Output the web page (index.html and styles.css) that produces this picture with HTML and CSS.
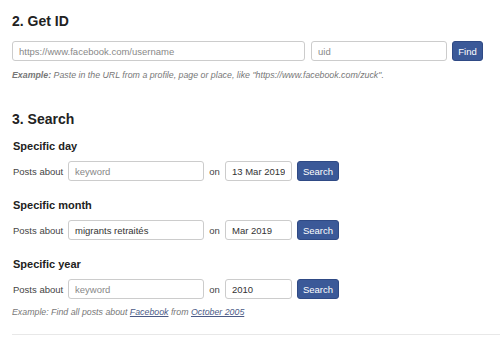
FILE: index.html
```html
<!DOCTYPE html>
<html>
<head>
<meta charset="utf-8">
<link rel="stylesheet" href="styles.css">
</head>
<body>
<div class="page">
  <section class="section">
    <h2 class="title">2. Get ID</h2>
    <div class="id-row">
      <input class="field field-url" type="text" placeholder="https://www.facebook.com/username">
      <input class="field field-uid" type="text" placeholder="uid">
      <button class="btn">Find</button>
    </div>
    <p class="hint"><b>Example:</b> Paste in the URL from a profile, page or place, like "https://www.facebook.com/zuck".</p>
  </section>

  <section class="section search">
    <h2 class="title">3. Search</h2>

    <h3 class="sub">Specific day</h3>
    <div class="row">
      <span class="label">Posts about</span>
      <input class="field field-kw" type="text" placeholder="keyword">
      <span class="on">on</span>
      <input class="field field-date" type="text" value="13 Mar 2019">
      <button class="btn">Search</button>
    </div>

    <h3 class="sub">Specific month</h3>
    <div class="row">
      <span class="label">Posts about</span>
      <input class="field field-kw" type="text" value="migrants retraités">
      <span class="on">on</span>
      <input class="field field-date" type="text" value="Mar 2019">
      <button class="btn">Search</button>
    </div>

    <h3 class="sub">Specific year</h3>
    <div class="row">
      <span class="label">Posts about</span>
      <input class="field field-kw" type="text" placeholder="keyword">
      <span class="on">on</span>
      <input class="field field-date" type="text" value="2010">
      <button class="btn">Search</button>
    </div>
    <p class="hint hint-search">Example: Find all posts about <a href="#">Facebook</a> from <a href="#">October 2005</a></p>
  </section>
  <hr class="rule">
</div>
</body>
</html>
```
FILE: styles.css
```css
* { box-sizing: border-box; }
html, body { margin: 0; padding: 0; background: #fff; }
body {
  font-family: "Liberation Sans", Arial, sans-serif;
  color: #333;
  width: 500px;
  height: 337px;
  overflow: hidden;
}
.page {
  padding: 13px 0 0 12px;
}
.title {
  margin: 0;
  font-size: 14px;
  line-height: 16px;
  font-weight: bold;
  color: #222;
}
.id-row {
  display: flex;
  align-items: center;
  margin-top: 12px;
  height: 20px;
}
.field {
  height: 20px;
  border: 1px solid #ccc;
  border-radius: 3px;
  padding: 0 6px;
  font-family: "Liberation Sans", Arial, sans-serif;
  font-size: 9.5px;
  color: #333;
  background: #fff;
  outline: none;
}
.field::placeholder { color: #888; }
.field-url { width: 293px; }
.field-uid { width: 136px; margin-left: 6px; }
.btn {
  height: 20px;
  border: 1px solid #2f4a85;
  border-radius: 3px;
  background: #3b5998;
  color: #fff;
  font-family: "Liberation Sans", Arial, sans-serif;
  font-size: 9.5px;
  padding: 0 5px;
  margin-left: 5px;
}
.id-row .btn { width: 31px; padding: 0; }
.hint {
  margin: 9px 0 0;
  font-size: 8.8px;
  line-height: 11px;
  font-style: italic;
  color: #777;
}
.hint b { color: #777; }
.hint a { color: #4b5a86; text-decoration: underline; }
.search { margin-top: 30px; }
.sub {
  margin: 13px 0 0 1px;
  font-size: 11px;
  line-height: 13px;
  font-weight: bold;
  color: #222;
}
.row + .sub { margin-top: 18px; }
.row {
  display: flex;
  align-items: center;
  margin-top: 8px;
  height: 20px;
}
.label {
  font-size: 9.5px;
  color: #444;
  margin-left: 1px;
  width: 55px;
}
.field-kw { width: 136px; }
.field-date { width: 67px; }
.on {
  font-size: 9.5px;
  color: #444;
  width: 21px;
  text-align: center;
}
.row .btn { width: 42px; padding: 0; }
.hint-search { margin-top: 8px; }
.rule {
  border: 0;
  border-top: 1px solid #e8e8e8;
  margin: 16px 0 0 0;
  width: 488px;
}
```
